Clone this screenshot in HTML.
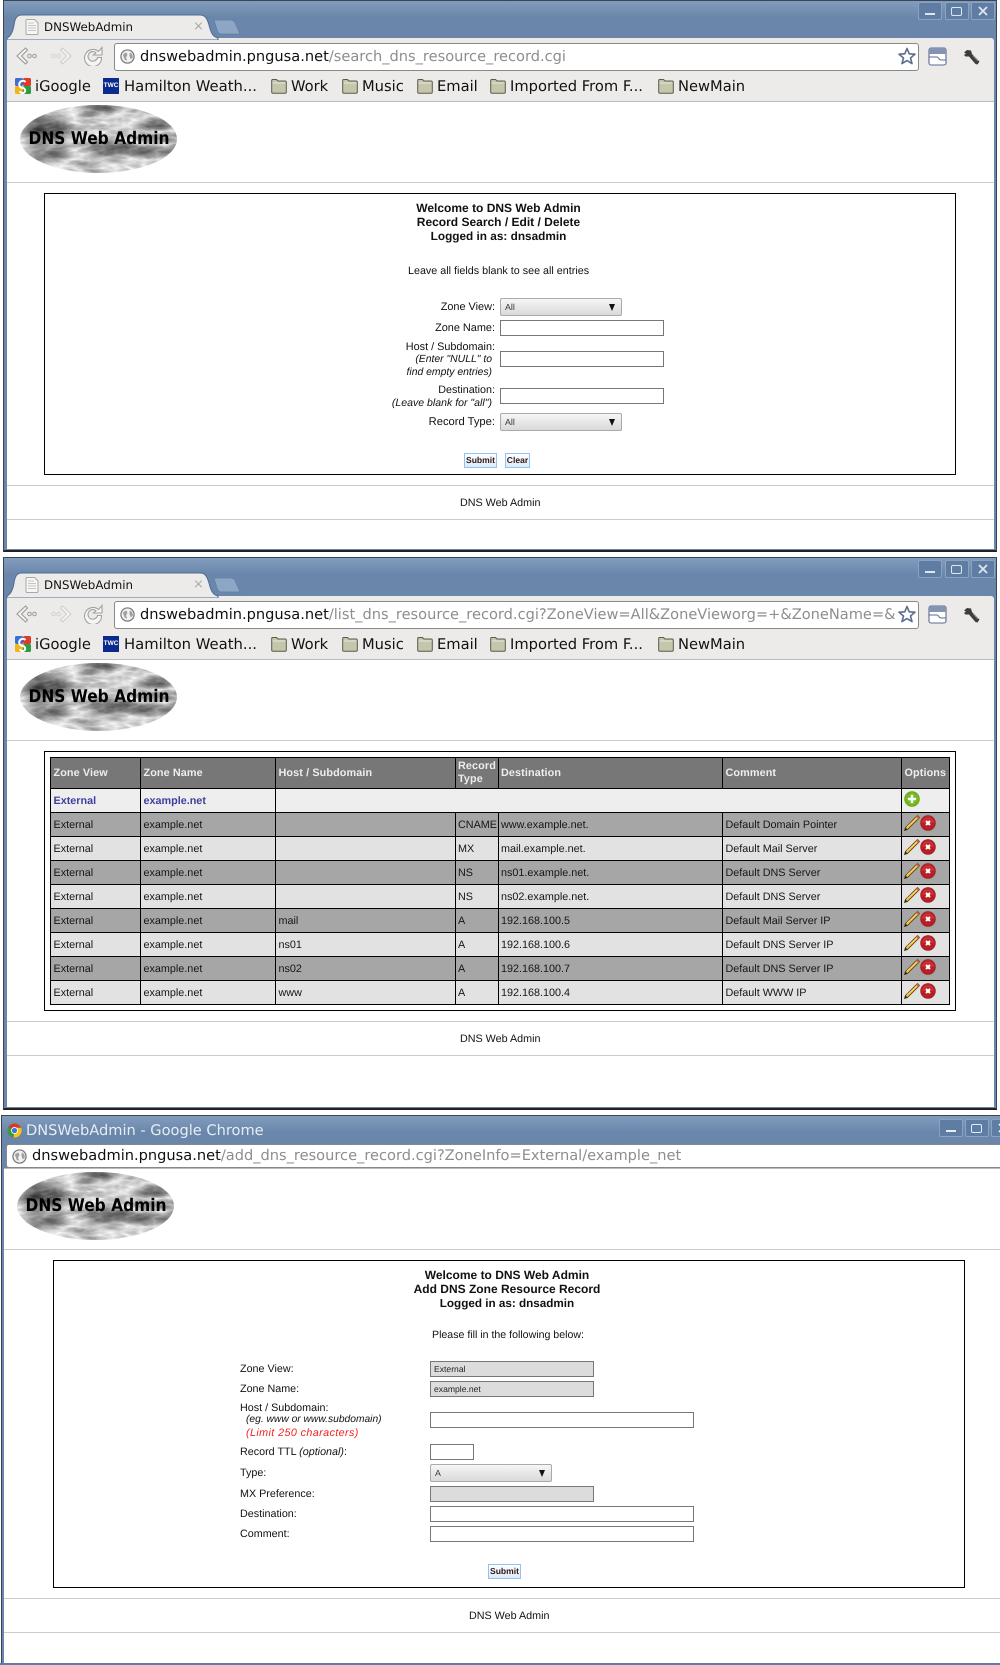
<!DOCTYPE html>
<html><head><meta charset="utf-8"><title>DNSWebAdmin</title>
<style>
html,body{margin:0;padding:0;background:#fff;width:1000px;height:1665px;overflow:hidden}
body{position:relative;font-family:"Liberation Sans",sans-serif;font-size:10.75px;color:#111;text-rendering:geometricPrecision}
.g{position:absolute;left:0;width:1000px}
.a{position:absolute}
.t{position:absolute;white-space:nowrap;line-height:16px;height:16px}
.r{text-align:right;right:auto}
.d{font-family:"DejaVu Sans",sans-serif;font-size:14.7px;color:#111}
.frame{position:absolute;left:3px;width:992px;background:linear-gradient(#829cbc 0,#6a87ab 16px,#6a87ab 100%);border:1px solid #3a4656;border-bottom:2px solid #222}
.tb{position:absolute;left:7px;top:38px;width:987px;height:63px;background:#ecebe9;border-bottom:1px solid #bbb;border-radius:3px 3px 0 0}
.wh{position:absolute;background:#fff}
.om{position:absolute;left:114px;top:43px;width:803px;height:26px;background:#fff;border:1px solid #888;border-radius:3px}
.url{position:absolute;left:140px;top:49px;height:16px;line-height:16px;white-space:nowrap;overflow:hidden;width:755px;font-family:"DejaVu Sans",sans-serif;font-size:14.6px;color:#111}
.url span{color:#8e8e8e}
.btn{position:absolute;width:22px;height:16px;border:1px solid #8ba3c2;border-radius:2px;background:#5f7da3}
.hr{position:absolute;height:1px;background:#ccc}
.box{position:absolute;border:1px solid #000;background:#fff}
.in{position:absolute;box-sizing:border-box;border:1px solid #777;background:#fff;height:16px}
.dis{background:#dcdcdc;font-size:8.6px;color:#222;line-height:14px;padding-left:3px}
.sel{position:absolute;box-sizing:border-box;width:122px;height:18px;border:1px solid #aaa;border-radius:2px;background:linear-gradient(#f6f6f6,#d9d9d9);font-size:8.8px;color:#333;line-height:16px;padding-left:4px}
.sel:after{content:"";position:absolute;right:6px;top:5px;border-left:3.5px solid transparent;border-right:3.5px solid transparent;border-top:7px solid #111}
.sb{position:absolute;box-sizing:border-box;height:15px;border:1px solid #8cc4f8;background:linear-gradient(#fff,#dcebfa);font-weight:bold;font-size:8.55px;line-height:13px;text-align:center;color:#301818}
.c{text-align:center;font-weight:bold;font-size:12px;line-height:14px;position:absolute}
.i{font-style:italic}
table{position:absolute;left:50px;top:199px;width:899px;border-collapse:collapse;table-layout:fixed;font-size:10.8px}
td{border:1px solid #000;padding:0 2.5px;height:23px;white-space:nowrap;overflow:hidden;position:relative;color:#151515}
td:nth-child(4),td:nth-child(5){padding-left:2px}
tr.h td{background:#777;color:#eee;font-weight:bold;height:30px;letter-spacing:.12px;line-height:13px}
tr.z td{background:#eee;color:#3e3e9e;font-weight:bold}
tr.k td{background:#a6a6a6}
tr.l td{background:#e2e2e2}
td svg{position:absolute;top:2px}
</style></head>
<body>
<svg width="0" height="0" style="position:absolute">
<defs>
<filter id="cl" x="0" y="0" width="100%" height="100%" color-interpolation-filters="sRGB">
<feTurbulence type="turbulence" baseFrequency="0.018 0.055" numOctaves="4" seed="11"/>
<feColorMatrix type="matrix" values="0 0 0 -0.95 1.0  0 0 0 -0.95 1.0  0 0 0 -0.95 1.0  0 0 0 0 1"/>
<feComposite in2="SourceGraphic" operator="in"/>
</filter>
<symbol id="back" viewBox="0 0 22 18"><path d="M9.5 1 L1 9 L9.5 17 L11.5 15 L5.5 9 L11.5 3 Z" fill="#f3f3f1" stroke="#9a9a98" stroke-width="1.1"/><circle cx="13.5" cy="9" r="1.8" fill="none" stroke="#9a9a98"/><circle cx="18.5" cy="9" r="1.8" fill="none" stroke="#9a9a98"/></symbol>
<symbol id="fwd" viewBox="0 0 22 18"><path d="M12.5 1 L21 9 L12.5 17 L10.5 15 L16.5 9 L10.5 3 Z" fill="#f3f3f1" stroke="#cfcfcd" stroke-width="1.1"/><circle cx="8.5" cy="9" r="1.8" fill="none" stroke="#d2d2d0"/><circle cx="3.5" cy="9" r="1.8" fill="none" stroke="#d2d2d0"/></symbol>
<symbol id="rel" viewBox="0 0 20 20"><path d="M15.5 5.5 A8.5 8.5 0 1 0 18.5 11.5 L14.5 11.5 A4.8 4.8 0 1 1 13 6.8 L10.5 9 L19 9 L19 1.5 Z" fill="#f5f5f3" stroke="#a2a2a0" stroke-width="1.1"/></symbol>
<symbol id="globe" viewBox="0 0 16 16"><circle cx="8" cy="8" r="7" fill="#f2f2f2" stroke="#777" stroke-width="1.3"/><path d="M3 6 L6.5 3.5 L8 6 L6.5 9 L7.5 12.5 L5 11.5 Z M10.5 3.5 L13 5.5 L13.8 9 L11.5 11 L10 7.5 Z" fill="#a0a0a0"/></symbol>
<symbol id="star" viewBox="0 0 18 18"><path d="M9 1.5 L11.2 6.8 L17 7.2 L12.5 11 L14 16.6 L9 13.6 L4 16.6 L5.5 11 L1 7.2 L6.8 6.8 Z" fill="#fff" stroke="#5d6c8c" stroke-width="1.6" stroke-linejoin="round"/></symbol>
<symbol id="page" viewBox="0 0 19 19"><rect x="1" y="1" width="17" height="17" rx="2" fill="#fff" stroke="#5a6c90" stroke-width="1.1"/><path d="M1 3 a2 2 0 0 1 2 -2 h13 a2 2 0 0 1 2 2 v4 h-17 Z" fill="#8694b4"/><path d="M1 10 h8 c2 0 1.5 3 4 3 h5" fill="none" stroke="#5a6c90"/></symbol>
<symbol id="wr" viewBox="0 0 17 17"><path d="M1 3.5 L4 1 L8 1.5 L9 5 L16.5 12.5 L14.5 15.5 L12.5 15 L6 7.5 L2.5 7.5 L1 6 L3 4.5 Z" fill="#3c3c3c"/><path d="M10 6.5 L15 12" stroke="#8a8a8a" stroke-width="1"/></symbol>
<symbol id="doc" viewBox="0 0 14 16"><path d="M1 1.5 Q1 .5 2 .5 L9.5 .5 L13 4 L13 14.5 Q13 15.5 12 15.5 L2 15.5 Q1 15.5 1 14.5 Z" fill="#f6f6f4" stroke="#a8a8a8"/><path d="M3 4h6M3 6.5h8M3 9h8M3 11.5h8" stroke="#c6c6c6"/></symbol>
<symbol id="fo" viewBox="0 0 16 16"><path d="M.7 14 V2.5 Q.7 1.5 1.7 1.5 H5.5 L7 3 H14 Q15.3 3 15.3 4.2 V14 Q15.3 15.3 14 15.3 H2 Q.7 15.3 .7 14 Z" fill="#c6c6ac" stroke="#5a5a48" stroke-width="1"/><path d="M1.5 5 H14.5" stroke="#e6e6d6"/></symbol>
<symbol id="ig" viewBox="0 0 16 16"><rect width="8" height="8" rx="1.5" fill="#3b6fd4"/><rect x="8" width="8" height="8" rx="1.5" fill="#dc3c2c"/><rect y="8" width="8" height="8" rx="1.5" fill="#f0b41c"/><rect x="8" y="8" width="8" height="8" rx="1.5" fill="#2f9a44"/><path d="M10.5 4 A3.6 3.6 0 1 0 8 10 A2.6 2.6 0 1 1 5 13" fill="none" stroke="#fff" stroke-width="2"/></symbol>
<symbol id="pe" viewBox="0 0 16 16"><path d="M13.5 .5 L15.5 2.5 L3.5 14.5 L.5 15.5 L1.5 12.5 Z" fill="#f3b62a" stroke="#5a3e10" stroke-width=".8"/><path d="M3 12 L13.5 2.5" stroke="#fbe08a" stroke-width=".9"/><path d="M1.5 12.5 L.5 15.5 L3.5 14.5 Z" fill="#222"/><path d="M13.5 .5 L15.5 2.5 L14.2 3.8 L12.2 1.8 Z" fill="#d05a4a"/></symbol>
<symbol id="xx" viewBox="0 0 16 16"><circle cx="8" cy="8" r="7.4" fill="#b81f24" stroke="#8e181c" stroke-width=".6"/><path d="M1.5 8 A6.5 6.5 0 0 1 14.5 8 Z" fill="#d84448" opacity=".4"/><path d="M6 6 L10 10 M10 6 L6 10" stroke="#fff" stroke-width="2"/></symbol>
<symbol id="pl" viewBox="0 0 16 16"><circle cx="8" cy="8" r="7.4" fill="#74b81e" stroke="#5c9a14" stroke-width=".6"/><path d="M8 3.8 V12.2 M3.8 8 H12.2" stroke="#fff" stroke-width="2.6"/></symbol>
</defs></svg>

<!-- WINDOW 1 -->
<div class="g" style="top:0;height:552px">
<div class="frame" style="top:0;height:549px"></div>
<div class="wh" style="left:7px;top:102px;width:987px;height:447px"></div>
<div class="btn" style="left:918px;top:2px"><div class="a" style="left:6px;top:10px;width:10px;height:2px;background:#dfe6ef"></div></div>
<div class="btn" style="left:945px;top:2px"><div class="a" style="left:5px;top:4px;width:9px;height:7px;border:1.5px solid #dfe6ef;border-radius:2px"></div></div>
<div class="btn" style="left:971px;top:2px"><svg class="a" style="left:6px;top:3px" width="10" height="10"><path d="M1 1 L9 9 M9 1 L1 9" stroke="#dfe6ef" stroke-width="1.8"/></svg></div>
<div class="tb"></div>
<svg class="a" style="left:0;top:0" width="250" height="40"><path d="M7 38 C11 36 13 31 14 25 C15 18 17 15 22 15 L200 15 C205 15 207 18 209 25 C211 33 213 37 218 38 L218 40 L7 40 Z" fill="#ecebe9" stroke="#4e6c92"/><path d="M214 20 L231 20 C234 20 235 22 236 25 L240 34 L222 34 C219 34 218 33 217 30 Z" fill="#8ea6c6" stroke="#5f7da3" stroke-width=".7"/></svg>
<svg class="a" style="left:25px;top:19px" width="14" height="16"><use href="#doc"/></svg>
<div class="t d" style="left:44px;top:19px;font-size:11.85px">DNSWebAdmin</div>
<div class="t" style="left:193px;top:19px;font-family:'DejaVu Sans';font-size:13px;color:#aaa">×</div>
<svg class="a" style="left:16px;top:47px" width="22" height="18"><use href="#back"/></svg>
<svg class="a" style="left:50px;top:47px" width="22" height="18"><use href="#fwd"/></svg>
<svg class="a" style="left:83px;top:46px" width="20" height="20"><use href="#rel"/></svg>
<div class="om"></div>
<svg class="a" style="left:120px;top:49px" width="15" height="15"><use href="#globe"/></svg>
<div class="url">dnswebadmin.pngusa.net<span>/search_dns_resource_record.cgi</span></div>
<svg class="a" style="left:898px;top:47px" width="18" height="18"><use href="#star"/></svg>
<svg class="a" style="left:928px;top:47px" width="19" height="19"><use href="#page"/></svg>
<svg class="a" style="left:963px;top:49px" width="17" height="17"><use href="#wr"/></svg>
<svg class="a" style="left:15px;top:78px" width="16" height="16"><use href="#ig"/></svg>
<div class="t d" style="left:35px;top:79px">iGoogle</div>
<div class="a" style="left:103px;top:78px;width:16px;height:16px;background:#0a2a8e;color:#fff;font-size:6.5px;font-weight:bold;line-height:16px;text-align:center">TWC</div>
<div class="t d" style="left:124px;top:79px;font-size:14.8px">Hamilton Weath...</div>
<svg class="a" style="left:271px;top:78px" width="16" height="16"><use href="#fo"/></svg>
<div class="t d" style="left:291px;top:79px">Work</div>
<svg class="a" style="left:342px;top:78px" width="16" height="16"><use href="#fo"/></svg>
<div class="t d" style="left:362px;top:79px">Music</div>
<svg class="a" style="left:417px;top:78px" width="16" height="16"><use href="#fo"/></svg>
<div class="t d" style="left:437px;top:79px">Email</div>
<svg class="a" style="left:490px;top:78px" width="16" height="16"><use href="#fo"/></svg>
<div class="t d" style="left:510px;top:79px">Imported From F...</div>
<svg class="a" style="left:658px;top:78px" width="16" height="16"><use href="#fo"/></svg>
<div class="t d" style="left:678px;top:79px">NewMain</div>
<svg class="a" style="left:20px;top:105px" width="158" height="69"><ellipse cx="78.5" cy="34" rx="78.5" ry="34" fill="#000" filter="url(#cl)"/><text x="8.5" y="39" font-family="DejaVu Sans" font-weight="bold" font-size="17.5" textLength="141" lengthAdjust="spacingAndGlyphs" fill="#000">DNS Web Admin</text></svg>
<div class="hr" style="left:7px;top:182px;width:987px"></div>
<div class="box" style="left:44px;top:193px;width:910px;height:280px"></div>
<div class="c" style="left:298.5px;top:201px;width:400px">Welcome to DNS Web Admin<br>Record Search / Edit / Delete<br><span style="font-size:11.8px">Logged in as: dnsadmin</span></div>
<div class="t" style="left:408px;top:263px">Leave all fields blank to see all entries</div>
<div class="t r" style="left:295px;width:200px;top:299px;font-size:10.9px">Zone View:</div>
<div class="sel" style="left:500px;top:298px">All</div>
<div class="t r" style="left:295px;width:200px;top:320px;font-size:10.9px">Zone Name:</div>
<div class="in" style="left:500px;top:320px;width:164px"></div>
<div class="t r" style="left:295px;width:200px;top:339px;font-size:10.85px">Host / Subdomain:</div>
<div class="t r i" style="left:292px;width:200px;top:352px;font-size:10.4px">(Enter "NULL" to</div>
<div class="t r i" style="left:292px;width:200px;top:365px;font-size:10.4px">find empty entries)</div>
<div class="in" style="left:500px;top:351px;width:164px"></div>
<div class="t r" style="left:295px;width:200px;top:382px">Destination:</div>
<div class="t r i" style="left:292px;width:200px;top:395px;font-size:10.55px">(Leave blank for "all")</div>
<div class="in" style="left:500px;top:388px;width:164px"></div>
<div class="t r" style="left:295px;width:200px;top:414px;font-size:11.2px">Record Type:</div>
<div class="sel" style="left:500px;top:413px">All</div>
<div class="sb" style="left:464px;top:453px;width:33px">Submit</div>
<div class="sb" style="left:505px;top:453px;width:25px">Clear</div>
<div class="hr" style="left:7px;top:485px;width:987px"></div>
<div class="t" style="left:460px;top:495px">DNS Web Admin</div>
<div class="hr" style="left:7px;top:519px;width:987px"></div>
</div>

<!-- WINDOW 2 -->
<div class="g" style="top:558px;height:552px">
<div class="frame" style="top:-1px;height:550px"></div>
<div class="wh" style="left:7px;top:102px;width:987px;height:447px"></div>
<div class="btn" style="left:918px;top:2px"><div class="a" style="left:6px;top:10px;width:10px;height:2px;background:#dfe6ef"></div></div>
<div class="btn" style="left:945px;top:2px"><div class="a" style="left:5px;top:4px;width:9px;height:7px;border:1.5px solid #dfe6ef;border-radius:2px"></div></div>
<div class="btn" style="left:971px;top:2px"><svg class="a" style="left:6px;top:3px" width="10" height="10"><path d="M1 1 L9 9 M9 1 L1 9" stroke="#dfe6ef" stroke-width="1.8"/></svg></div>
<div class="tb"></div>
<svg class="a" style="left:0;top:0" width="250" height="40"><path d="M7 38 C11 36 13 31 14 25 C15 18 17 15 22 15 L200 15 C205 15 207 18 209 25 C211 33 213 37 218 38 L218 40 L7 40 Z" fill="#ecebe9" stroke="#4e6c92"/><path d="M214 20 L231 20 C234 20 235 22 236 25 L240 34 L222 34 C219 34 218 33 217 30 Z" fill="#8ea6c6" stroke="#5f7da3" stroke-width=".7"/></svg>
<svg class="a" style="left:25px;top:19px" width="14" height="16"><use href="#doc"/></svg>
<div class="t d" style="left:44px;top:19px;font-size:11.85px">DNSWebAdmin</div>
<div class="t" style="left:193px;top:19px;font-family:'DejaVu Sans';font-size:13px;color:#aaa">×</div>
<svg class="a" style="left:16px;top:47px" width="22" height="18"><use href="#back"/></svg>
<svg class="a" style="left:50px;top:47px" width="22" height="18"><use href="#fwd"/></svg>
<svg class="a" style="left:83px;top:46px" width="20" height="20"><use href="#rel"/></svg>
<div class="om"></div>
<svg class="a" style="left:120px;top:49px" width="15" height="15"><use href="#globe"/></svg>
<div class="url">dnswebadmin.pngusa.net<span>/list_dns_resource_record.cgi?ZoneView=All&amp;ZoneVieworg=+&amp;ZoneName=&amp;</span></div>
<svg class="a" style="left:898px;top:47px" width="18" height="18"><use href="#star"/></svg>
<svg class="a" style="left:928px;top:47px" width="19" height="19"><use href="#page"/></svg>
<svg class="a" style="left:963px;top:49px" width="17" height="17"><use href="#wr"/></svg>
<svg class="a" style="left:15px;top:78px" width="16" height="16"><use href="#ig"/></svg>
<div class="t d" style="left:35px;top:79px">iGoogle</div>
<div class="a" style="left:103px;top:78px;width:16px;height:16px;background:#0a2a8e;color:#fff;font-size:6.5px;font-weight:bold;line-height:16px;text-align:center">TWC</div>
<div class="t d" style="left:124px;top:79px;font-size:14.8px">Hamilton Weath...</div>
<svg class="a" style="left:271px;top:78px" width="16" height="16"><use href="#fo"/></svg>
<div class="t d" style="left:291px;top:79px">Work</div>
<svg class="a" style="left:342px;top:78px" width="16" height="16"><use href="#fo"/></svg>
<div class="t d" style="left:362px;top:79px">Music</div>
<svg class="a" style="left:417px;top:78px" width="16" height="16"><use href="#fo"/></svg>
<div class="t d" style="left:437px;top:79px">Email</div>
<svg class="a" style="left:490px;top:78px" width="16" height="16"><use href="#fo"/></svg>
<div class="t d" style="left:510px;top:79px">Imported From F...</div>
<svg class="a" style="left:658px;top:78px" width="16" height="16"><use href="#fo"/></svg>
<div class="t d" style="left:678px;top:79px">NewMain</div>
<svg class="a" style="left:20px;top:105px" width="158" height="69"><ellipse cx="78.5" cy="34" rx="78.5" ry="34" fill="#000" filter="url(#cl)"/><text x="8.5" y="39" font-family="DejaVu Sans" font-weight="bold" font-size="17.5" textLength="141" lengthAdjust="spacingAndGlyphs" fill="#000">DNS Web Admin</text></svg>
<div class="hr" style="left:7px;top:182px;width:987px"></div>
<div class="box" style="left:44px;top:193px;width:910px;height:258px"></div>
<table>
<colgroup><col style="width:90px"><col style="width:135px"><col style="width:180px"><col style="width:43px"><col style="width:224px"><col style="width:179px"><col style="width:48px"></colgroup>
<tr class="h"><td>Zone View</td><td>Zone Name</td><td>Host / Subdomain</td><td>Record<br>Type</td><td>Destination</td><td>Comment</td><td>Options</td></tr>
<tr class="z"><td>External</td><td>example.net</td><td colspan="4"></td><td><svg style="left:2px;width:16px;height:16px"><use href="#pl"/></svg></td></tr>
<tr class="k"><td>External</td><td>example.net</td><td></td><td>CNAME</td><td>www.example.net.</td><td>Default Domain Pointer</td><td><svg style="left:2px;width:16px;height:16px"><use href="#pe"/></svg><svg style="left:18px;width:16px;height:16px"><use href="#xx"/></svg></td></tr>
<tr class="l"><td>External</td><td>example.net</td><td></td><td>MX</td><td>mail.example.net.</td><td>Default Mail Server</td><td><svg style="left:2px;width:16px;height:16px"><use href="#pe"/></svg><svg style="left:18px;width:16px;height:16px"><use href="#xx"/></svg></td></tr>
<tr class="k"><td>External</td><td>example.net</td><td></td><td>NS</td><td>ns01.example.net.</td><td>Default DNS Server</td><td><svg style="left:2px;width:16px;height:16px"><use href="#pe"/></svg><svg style="left:18px;width:16px;height:16px"><use href="#xx"/></svg></td></tr>
<tr class="l"><td>External</td><td>example.net</td><td></td><td>NS</td><td>ns02.example.net.</td><td>Default DNS Server</td><td><svg style="left:2px;width:16px;height:16px"><use href="#pe"/></svg><svg style="left:18px;width:16px;height:16px"><use href="#xx"/></svg></td></tr>
<tr class="k"><td>External</td><td>example.net</td><td>mail</td><td>A</td><td>192.168.100.5</td><td>Default Mail Server IP</td><td><svg style="left:2px;width:16px;height:16px"><use href="#pe"/></svg><svg style="left:18px;width:16px;height:16px"><use href="#xx"/></svg></td></tr>
<tr class="l"><td>External</td><td>example.net</td><td>ns01</td><td>A</td><td>192.168.100.6</td><td>Default DNS Server IP</td><td><svg style="left:2px;width:16px;height:16px"><use href="#pe"/></svg><svg style="left:18px;width:16px;height:16px"><use href="#xx"/></svg></td></tr>
<tr class="k"><td>External</td><td>example.net</td><td>ns02</td><td>A</td><td>192.168.100.7</td><td>Default DNS Server IP</td><td><svg style="left:2px;width:16px;height:16px"><use href="#pe"/></svg><svg style="left:18px;width:16px;height:16px"><use href="#xx"/></svg></td></tr>
<tr class="l"><td>External</td><td>example.net</td><td>www</td><td>A</td><td>192.168.100.4</td><td>Default WWW IP</td><td><svg style="left:2px;width:16px;height:16px"><use href="#pe"/></svg><svg style="left:18px;width:16px;height:16px"><use href="#xx"/></svg></td></tr>
</table>
<div class="hr" style="left:7px;top:463px;width:987px"></div>
<div class="t" style="left:460px;top:473px">DNS Web Admin</div>
<div class="hr" style="left:7px;top:497px;width:987px"></div>
</div>

<!-- WINDOW 3 -->
<div class="a" style="left:1px;top:1115px;width:1010px;height:548px;background:linear-gradient(#829cbc 0,#6a87ab 16px,#6a87ab 100%);border:1px solid #3a4656"></div>
<div class="wh" style="left:4px;top:1168px;width:996px;height:495px"></div>
<div class="a" style="left:0;top:1663px;width:1000px;height:2px;background:#5f7da3"></div>
<div class="a" style="left:6px;top:1144px;width:994px;height:22px;background:#fff;border:1px solid #888;border-right:0;border-radius:3px 0 0 3px"></div>
<div class="a" style="left:4px;top:1168px;width:996px;height:1px;background:#bbb"></div>
<svg class="a" style="left:7px;top:1123px" width="15" height="15" viewBox="0 0 16 16"><circle cx="8" cy="8" r="7.5" fill="#d8392b"/><path d="M8 8 L1.5 4 A7.5 7.5 0 0 0 7 15.4 Z" fill="#3a9a3f"/><path d="M8 8 L7 15.4 A7.5 7.5 0 0 0 15 5 L8 5 Z" fill="#f5c518"/><circle cx="8" cy="8" r="3.7" fill="#fff"/><circle cx="8" cy="8" r="2.8" fill="#3b78d8"/></svg>
<div class="t d" style="left:26px;top:1123px;font-size:14.6px;color:#e6ecf4">DNSWebAdmin - Google Chrome</div>
<div class="btn" style="left:939px;top:1119px"><div class="a" style="left:6px;top:10px;width:10px;height:2px;background:#e6ecf4"></div></div>
<div class="btn" style="left:965px;top:1119px"><div class="a" style="left:5px;top:4px;width:9px;height:7px;border:1.5px solid #e6ecf4;border-radius:2px"></div></div>
<div class="btn" style="left:991px;top:1119px"><svg class="a" style="left:6px;top:3px" width="10" height="10"><path d="M1 1 L9 9 M9 1 L1 9" stroke="#e6ecf4" stroke-width="1.8"/></svg></div>
<svg class="a" style="left:12px;top:1149px" width="15" height="15"><use href="#globe"/></svg>
<div class="url" style="left:32px;top:1148px;width:900px">dnswebadmin.pngusa.net<span>/add_dns_resource_record.cgi?ZoneInfo=External/example_net</span></div>
<svg class="a" style="left:17px;top:1172px" width="158" height="69"><ellipse cx="78.5" cy="34" rx="78.5" ry="34" fill="#000" filter="url(#cl)"/><text x="8.5" y="39" font-family="DejaVu Sans" font-weight="bold" font-size="17.5" textLength="141" lengthAdjust="spacingAndGlyphs" fill="#000">DNS Web Admin</text></svg>
<div class="hr" style="left:4px;top:1249px;width:996px"></div>
<div class="box" style="left:53px;top:1260px;width:910px;height:326px"></div>
<div class="c" style="left:307px;top:1268px;width:400px">Welcome to DNS Web Admin<br>Add DNS Zone Resource Record<br><span style="font-size:11.7px">Logged in as: dnsadmin</span></div>
<div class="t" style="left:432px;top:1327px;font-size:10.6px">Please fill in the following below:</div>
<div class="t" style="left:240px;top:1361px">Zone View:</div>
<div class="in dis" style="left:430px;top:1361px;width:164px">External</div>
<div class="t" style="left:240px;top:1381px">Zone Name:</div>
<div class="in dis" style="left:430px;top:1381px;width:164px">example.net</div>
<div class="t" style="left:240px;top:1400px">Host / Subdomain:</div>
<div class="t i" style="left:246px;top:1412px;font-size:10.26px">(eg. www or www.subdomain)</div>
<div class="t i" style="left:246px;top:1425px;color:#f02020;font-size:10.75px;letter-spacing:.4px">(Limit 250 characters)</div>
<div class="in" style="left:430px;top:1412px;width:264px"></div>
<div class="t" style="left:240px;top:1444px">Record TTL <span class="i">(optional)</span>:</div>
<div class="in" style="left:430px;top:1444px;width:44px"></div>
<div class="t" style="left:240px;top:1465px">Type:</div>
<div class="sel" style="left:430px;top:1464px">A</div>
<div class="t" style="left:240px;top:1486px">MX Preference:</div>
<div class="in dis" style="left:430px;top:1486px;width:164px"></div>
<div class="t" style="left:240px;top:1506px">Destination:</div>
<div class="in" style="left:430px;top:1506px;width:264px"></div>
<div class="t" style="left:240px;top:1526px">Comment:</div>
<div class="in" style="left:430px;top:1526px;width:264px"></div>
<div class="sb" style="left:488px;top:1564px;width:33px">Submit</div>
<div class="hr" style="left:4px;top:1598px;width:996px"></div>
<div class="t" style="left:469px;top:1608px">DNS Web Admin</div>
<div class="hr" style="left:4px;top:1632px;width:996px"></div>
</body></html>
